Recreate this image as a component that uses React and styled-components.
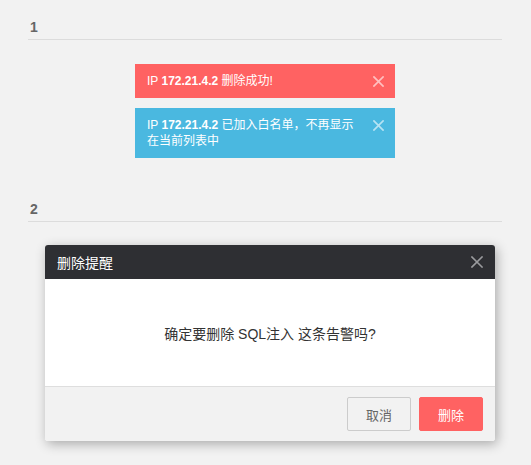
import React from "react";
import styled, { createGlobalStyle } from "styled-components";

const GlobalStyle = createGlobalStyle`
  html, body {
    margin: 0;
    padding: 0;
    background: #f2f2f2;
    font-family: "Liberation Sans", "Noto Sans CJK SC", sans-serif;
  }
`;

function CloseIcon({ size, color, width }) {
  return (
    <svg width={size} height={size} viewBox="0 0 12 12" fill="none">
      <path
        d="M1 1L11 11M11 1L1 11"
        stroke={color}
        strokeWidth={width}
        strokeLinecap="square"
      />
    </svg>
  );
}

function App() {
  return (
    <Page>
      <GlobalStyle />
      <SectionTitle $top={17}>1</SectionTitle>
      <ToastList>
        <Toast $bg="#ff6262">
          <ToastText>
            IP <b>172.21.4.2</b> 删除成功!
          </ToastText>
          <ToastClose>
            <CloseIcon size={11} color="rgba(255,255,255,0.6)" width={1.8} />
          </ToastClose>
        </Toast>
        <Toast $bg="#4ab8e0">
          <ToastText>
            IP <b>172.21.4.2</b> 已加入白名单，不再显示
            <br />
            在当前列表中
          </ToastText>
          <ToastClose>
            <CloseIcon size={11} color="rgba(255,255,255,0.6)" width={1.8} />
          </ToastClose>
        </Toast>
      </ToastList>

      <SectionTitle $top={41}>2</SectionTitle>
      <Dialog>
        <DialogHeader>
          <DialogTitle>删除提醒</DialogTitle>
          <CloseIcon size={12} color="#9a9b9e" width={1.6} />
        </DialogHeader>
        <DialogBody>确定要删除 SQL注入 这条告警吗?</DialogBody>
        <DialogFooter>
          <Button>取消</Button>
          <Button $primary>删除</Button>
        </DialogFooter>
      </Dialog>
    </Page>
  );
}

export default App;

const Page = styled.div`
  padding: 0 29px 30px 28px;
`;

const SectionTitle = styled.div`
  margin-top: ${(p) => p.$top}px;
  padding: 0 0 2px 2px;
  height: 20px;
  line-height: 20px;
  font-size: 14px;
  font-weight: bold;
  color: #666;
  border-bottom: 1px solid #dcdcdc;
`;

const ToastList = styled.div`
  display: flex;
  flex-direction: column;
  align-items: center;
  gap: 10px;
  margin-top: 24px;
`;

const Toast = styled.div`
  width: 260px;
  box-sizing: border-box;
  display: flex;
  align-items: flex-start;
  padding: 9px 11px 9px 12px;
  background: ${(p) => p.$bg};
  color: #fff;
  font-size: 12px;
  line-height: 16px;
`;

const ToastText = styled.div`
  flex: 1;
  b {
    font-weight: bold;
  }
`;

const ToastClose = styled.div`
  display: flex;
  align-items: center;
  height: 16px;
  margin-left: 8px;
`;

const Dialog = styled.div`
  width: 450px;
  margin: 23px 0 0 17px;
  background: #fff;
  border-radius: 3px;
  overflow: hidden;
  box-shadow: 2px 3px 12px rgba(0, 0, 0, 0.3);
`;

const DialogHeader = styled.div`
  height: 34px;
  display: flex;
  align-items: center;
  justify-content: space-between;
  padding: 0 12px;
  background: #2e2f33;
`;

const DialogTitle = styled.div`
  color: #fff;
  font-size: 14px;
`;

const DialogBody = styled.div`
  height: 107px;
  display: flex;
  align-items: center;
  justify-content: center;
  font-size: 14px;
  color: #333;
`;

const DialogFooter = styled.div`
  display: flex;
  justify-content: flex-end;
  gap: 8px;
  padding: 10px 12px;
  background: #f2f2f2;
  border-top: 1px solid #dedede;
`;

const Button = styled.button`
  width: 64px;
  height: 34px;
  border-radius: 2px;
  font-family: inherit;
  font-size: 13px;
  border: 1px solid ${(p) => (p.$primary ? "#ff6262" : "#cccccc")};
  background: ${(p) => (p.$primary ? "#ff6262" : "#f2f2f2")};
  color: ${(p) => (p.$primary ? "#fff" : "#666")};
`;
